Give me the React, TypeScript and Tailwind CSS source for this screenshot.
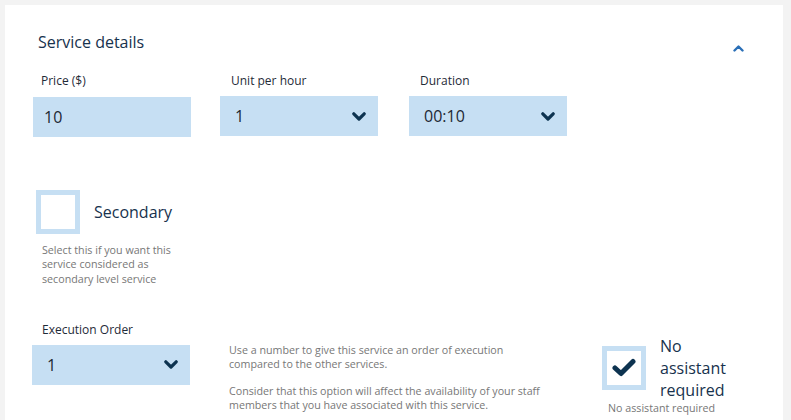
import React from 'react';

const fieldBg = 'bg-[#c6dff3]';

function ChevronDown() {
  return (
    <svg width="14" height="9" viewBox="0 0 14 9" className="shrink-0">
      <path
        d="M1.8 1.8 L7 7 L12.2 1.8"
        fill="none"
        stroke="#0d3350"
        strokeWidth="3.2"
        strokeLinecap="round"
        strokeLinejoin="round"
      />
    </svg>
  );
}

function Select({ value }: { value: string }) {
  return (
    <div className={`flex h-[40px] w-[158px] items-center justify-between ${fieldBg} pl-[15px] pr-[12px] text-[16px] text-[#1d2833]`}>
      <span>{value}</span>
      <ChevronDown />
    </div>
  );
}

export default function App() {
  return (
    <div className="h-[420px] overflow-hidden bg-[#f3f3f3] pt-[5px] font-['Open_Sans',sans-serif]">
      <div className="ml-[5px] mr-[8px] h-[600px] bg-white pl-[27px] pt-[25px]">
        {/* Header */}
        <div className="flex items-start justify-between">
          <h2 className="ml-[6px] text-[16px] leading-[24px] text-[#17324d]">Service details</h2>
          <svg width="11" height="7" viewBox="0 0 11 7" className="mr-[39px] mt-[15px]">
            <path
              d="M1.5 5.5 L5.5 1.5 L9.5 5.5"
              fill="none"
              stroke="#2a6fb7"
              strokeWidth="2.4"
              strokeLinecap="round"
              strokeLinejoin="round"
            />
          </svg>
        </div>

        {/* Fields */}
        <div className="mt-[19px] flex text-[12px] leading-[16px] text-[#1f2b38]">
          <div className="ml-[1px] w-[158px]">
            <div className="pl-[8px]">Price ($)</div>
            <div className={`mt-[8px] flex h-[40px] items-center ${fieldBg} pl-[11px] text-[16px] text-[#1d2833]`}>10</div>
          </div>
          <div className="ml-[29px] w-[158px]">
            <div className="pl-[11px]">Unit per hour</div>
            <div className="mt-[7px]">
              <Select value="1" />
            </div>
          </div>
          <div className="ml-[31px] w-[158px]">
            <div className="pl-[11px]">Duration</div>
            <div className="mt-[7px]">
              <Select value="00:10" />
            </div>
          </div>
        </div>

        {/* Secondary */}
        <div className="ml-[4px] mt-[53px] flex items-center gap-[14px]">
          <div className="h-[44px] w-[44px] border-[5px] border-[#c6dff3] bg-white" />
          <span className="text-[16px] leading-[22px] text-[#17324d]">Secondary</span>
        </div>
        <p className="ml-[10px] mt-[9px] w-[140px] text-[10.7px] leading-[14.3px] text-[#777777]">
          Select this if you want this service considered as secondary level service
        </p>

        {/* Execution order */}
        <div className="mt-[36px] flex items-start">
          <div className="w-[158px]">
            <div className="pl-[10px] text-[12px] leading-[16px] text-[#1f2b38]">Execution Order</div>
            <div className="mt-[7px]">
              <Select value="1" />
            </div>
          </div>
          <div className="ml-[39px] mt-[21px] w-[320px] text-[10.7px] leading-[14.5px] text-[#777777]">
            <p>Use a number to give this service an order of execution compared to the other services.</p>
            <p className="mt-[12px]">
              Consider that this option will affect the availability of your staff members that you have associated with this service.
            </p>
          </div>
          <div className="ml-[53px] mt-[13px]">
            <div className="flex items-center gap-[14px]">
              <div className="flex h-[44px] w-[44px] items-center justify-center border-[5px] border-[#c6dff3] bg-white">
                <svg width="24" height="19" viewBox="0 0 24 19">
                  <path
                    d="M3 10 L9 15.5 L21 3.5"
                    fill="none"
                    stroke="#0d3350"
                    strokeWidth="5"
                    strokeLinecap="round"
                    strokeLinejoin="round"
                  />
                </svg>
              </div>
              <span className="w-[80px] text-[16px] leading-[22px] text-[#17324d]">No assistant required</span>
            </div>
            <div className="ml-[6px] text-[10.7px] leading-[14px] text-[#777777]">No assistant required</div>
          </div>
        </div>
      </div>
    </div>
  );
}
